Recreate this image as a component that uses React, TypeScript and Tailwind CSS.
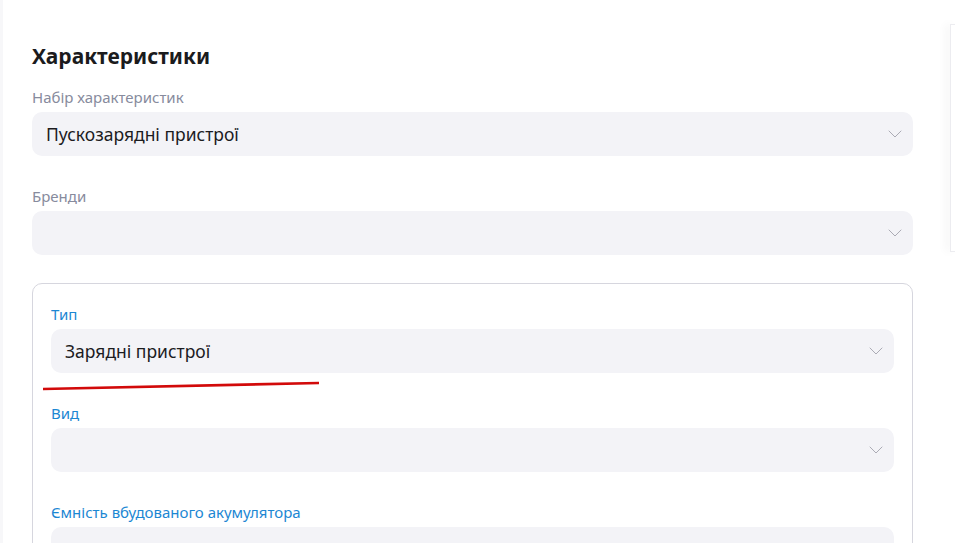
import { ChevronDown } from "lucide-react";

const Field = ({
  label,
  value,
  accent,
}: {
  label: string;
  value?: string;
  accent?: boolean;
}) => (
  <div className="flex flex-col">
    <span
      className={`text-[15px] leading-5 ${accent ? "text-[#1c87d3]" : "text-[#878b9d]"}`}
    >
      {label}
    </span>
    <div className="mt-[5px] flex h-11 items-center justify-between rounded-[10px] bg-[#f3f3f7] pl-[14px] pr-[6px]">
      <span className="text-[17.5px] text-[#1c1c1f]">{value}</span>
      <ChevronDown size={24} strokeWidth={0.9} className="text-[#a3a3ad]" />
    </div>
  </div>
);

export default function App() {
  return (
    <div
      className="relative flex h-[543px] w-[955px] overflow-hidden bg-white"
      style={{ fontFamily: '"Noto Sans", "Open Sans", sans-serif' }}
    >
      <div className="w-[945px] shrink-0 border-l-[3px] border-[#f7f7f9] pl-[29px] pr-8 pt-[42px]">
        <h2 className="text-[21px] font-bold leading-7 text-[#1b1b1d]">
          Характеристики
        </h2>
        <div className="mt-[17px] flex flex-col gap-[30px]">
          <Field label="Набір характеристик" value="Пускозарядні пристрої" />
          <Field label="Бренди" />
        </div>
        <div className="mt-[28px] flex flex-col gap-[30px] rounded-[10px] border border-[#d6d6de] px-[18px] pb-6 pt-[20px]">
          <Field accent label="Тип" value="Зарядні пристрої" />
          <Field accent label="Вид" />
          <Field accent label="Ємність вбудованого акумулятора" />
        </div>
      </div>
      <div className="ml-[5px] mt-6 h-[228px] flex-1 border-l border-t border-b border-[#ececf0] bg-white shadow-[-4px_0_8px_rgba(0,0,0,0.05)]" />
      <svg
        className="pointer-events-none absolute left-0 top-0"
        width="955"
        height="543"
      >
        <line
          x1="43"
          y1="389"
          x2="319"
          y2="383"
          stroke="#d20a0a"
          strokeWidth="2.6"
          strokeLinecap="butt"
        />
      </svg>
    </div>
  );
}
